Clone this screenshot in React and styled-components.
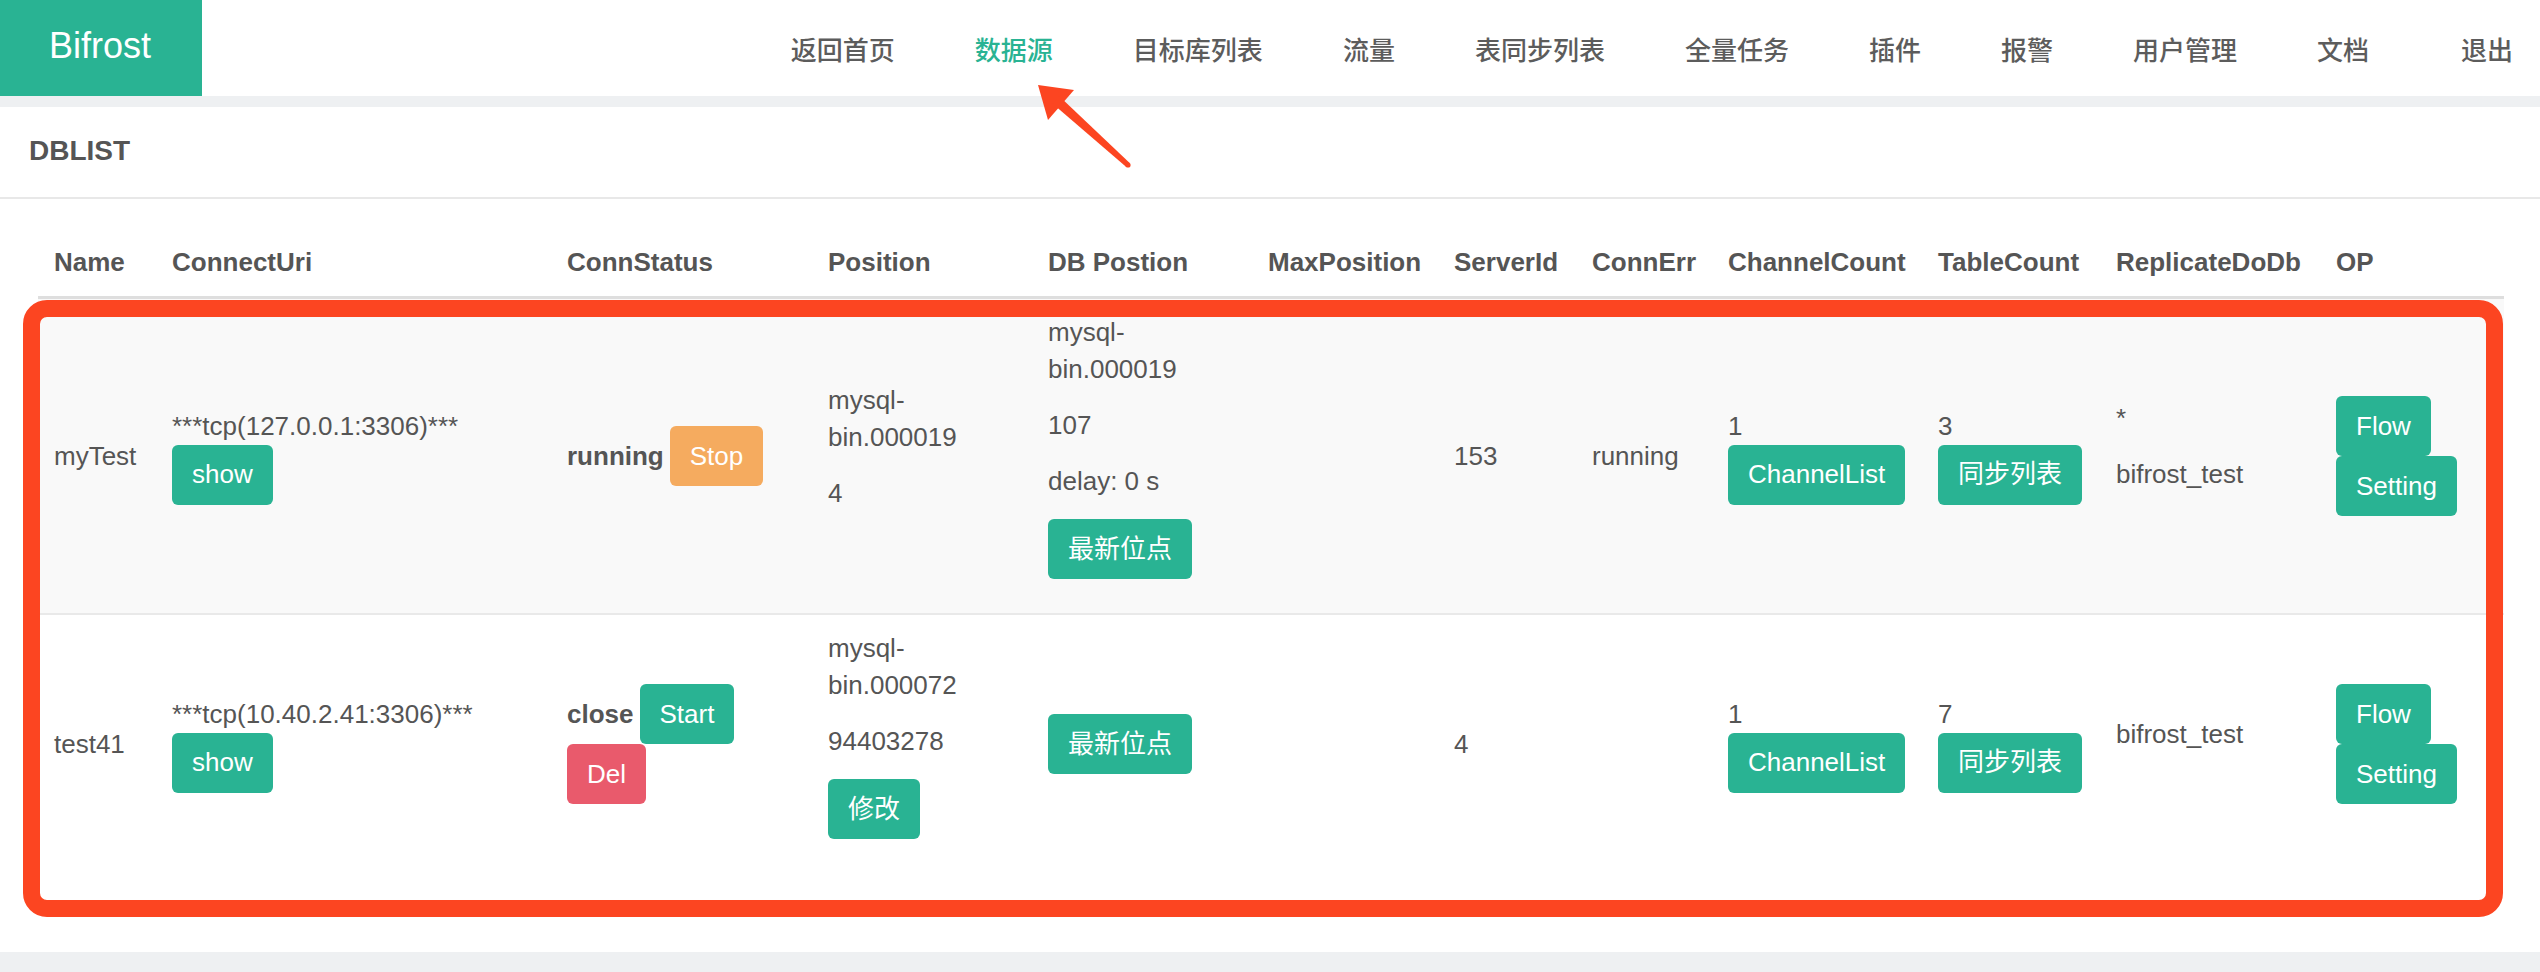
import React from "react";
import styled, { createGlobalStyle } from "styled-components";

const GREEN = "#29b393";

const GlobalStyle = createGlobalStyle`
  html, body { margin: 0; padding: 0; }
  body {
    background: #eef0f2;
    font-family: "Liberation Sans", "Noto Sans CJK SC", sans-serif;
    color: #555;
    min-height: 100vh;
  }
  * { box-sizing: border-box; }
`;

const Page = styled.div`
  position: relative;
  width: 2540px;
`;

const Header = styled.header`
  height: 96px;
  background: #fff;
  display: flex;
  align-items: center;
`;

const Logo = styled.div`
  width: 202px;
  height: 96px;
  background: ${GREEN};
  color: #fff;
  font-size: 36px;
  display: flex;
  align-items: center;
  padding: 0 0 4px 49px;
`;

const Nav = styled.nav`
  margin-left: auto;
  display: flex;
  align-items: center;
  gap: 80px;
  padding-right: 27px;
`;

const NavItem = styled.a`
  font-family: "Noto Sans CJK SC", "Liberation Sans", sans-serif;
  font-size: 26px;
  font-weight: 500;
  line-height: 37px;
  color: ${(p) => (p.$active ? GREEN : "#5c5c5c")};
  margin-left: ${(p) => (p.$extra ? "12px" : "0")};
  text-decoration: none;
  white-space: nowrap;
`;

const Panel = styled.section`
  margin-top: 11px;
  background: #fff;
`;

const PanelHeading = styled.h2`
  margin: 0;
  height: 92px;
  padding: 0 0 2px 29px;
  display: flex;
  align-items: center;
  font-size: 28px;
  font-weight: bold;
  color: #555;
  border-bottom: 2px solid #e8e8e8;
`;

const PanelBody = styled.div`
  position: relative;
  padding: 30px 36px 79px 38px;
`;

const Table = styled.table`
  width: 100%;
  table-layout: fixed;
  border-collapse: collapse;
  font-size: 26px;
  line-height: 37px;
  color: #555;
`;

const Th = styled.th`
  text-align: left;
  vertical-align: bottom;
  font-weight: bold;
  padding: 15px 16px;
  border-bottom: 3px solid #dedede;
  white-space: nowrap;
`;

const Tr = styled.tr`
  background: ${(p) => (p.$striped ? "#f9f9f9" : "#fff")};
`;

const Td = styled.td`
  padding: 15px 16px;
  vertical-align: middle;
  border-top: 2px solid #e9e9e9;
`;

const P = styled.p`
  margin: 0 0 19px;
`;

const Line = styled.div`
  line-height: 37px;
  white-space: nowrap;
`;

const Stack = styled.div`
  display: flex;
  flex-direction: column;
  align-items: flex-start;
`;

const Inline = styled.div`
  display: flex;
  align-items: baseline;
  gap: 6px;
`;

const Status = styled.b`
  font-weight: bold;
`;

const COLORS = { green: GREEN, orange: "#f5ab5f", red: "#e95a6c" };

const Btn = styled.button`
  display: inline-block;
  border: none;
  border-radius: 6px;
  padding: 11.5px 20px;
  font-family: "Liberation Sans", "Noto Sans CJK SC", sans-serif;
  font-size: 26px;
  line-height: 37px;
  color: #fff;
  background: ${(p) => COLORS[p.$variant || "green"]};
  white-space: nowrap;
  cursor: pointer;
`;

const RedFrame = styled.div`
  position: absolute;
  left: 23px;
  top: 101px;
  width: 2480px;
  height: 617px;
  border: 17px solid #fc4521;
  border-radius: 24px;
  pointer-events: none;
`;

const ArrowSvg = styled.svg`
  position: absolute;
  left: 1020px;
  top: 75px;
  width: 125px;
  height: 105px;
  pointer-events: none;
`;

const navItems = ["返回首页", "数据源", "目标库列表", "流量", "表同步列表", "全量任务", "插件", "报警", "用户管理", "文档"];
const cols = [
  ["Name", 118], ["ConnectUri", 395], ["ConnStatus", 261], ["Position", 220],
  ["DB Postion", 220], ["MaxPosition", 186], ["ServerId", 138], ["ConnErr", 136],
  ["ChannelCount", 210], ["TableCount", 178], ["ReplicateDoDb", 220], ["OP", 184],
];

export default function App() {
  return (
    <Page>
      <GlobalStyle />
      <Header>
        <Logo>Bifrost</Logo>
        <Nav>
          {navItems.map((n) => (
            <NavItem key={n} $active={n === "数据源"}>{n}</NavItem>
          ))}
          <NavItem $extra>退出</NavItem>
        </Nav>
      </Header>
      <Panel>
        <PanelHeading>DBLIST</PanelHeading>
        <PanelBody>
          <Table>
            <colgroup>
              {cols.map(([n, w]) => (
                <col key={n} style={{ width: w }} />
              ))}
            </colgroup>
            <thead>
              <tr>
                {cols.map(([n]) => (
                  <Th key={n}>{n}</Th>
                ))}
              </tr>
            </thead>
            <tbody>
              <Tr $striped>
                <Td>myTest</Td>
                <Td>
                  <Stack>
                    <Line>***tcp(127.0.0.1:3306)***</Line>
                    <Btn>show</Btn>
                  </Stack>
                </Td>
                <Td>
                  <Inline>
                    <Status>running</Status>
                    <Btn $variant="orange">Stop</Btn>
                  </Inline>
                </Td>
                <Td>
                  <P>mysql-bin.000019</P>
                  <P>4</P>
                </Td>
                <Td>
                  <P>mysql-bin.000019</P>
                  <P>107</P>
                  <P>delay: 0 s</P>
                  <P><Btn>最新位点</Btn></P>
                </Td>
                <Td></Td>
                <Td>153</Td>
                <Td>running</Td>
                <Td>
                  <Stack>
                    <Line>1</Line>
                    <Btn>ChannelList</Btn>
                  </Stack>
                </Td>
                <Td>
                  <Stack>
                    <Line>3</Line>
                    <Btn>同步列表</Btn>
                  </Stack>
                </Td>
                <Td>
                  <P>*</P>
                  <P>bifrost_test</P>
                </Td>
                <Td>
                  <Stack>
                    <Btn>Flow</Btn>
                    <Btn>Setting</Btn>
                  </Stack>
                </Td>
              </Tr>
              <Tr>
                <Td>test41</Td>
                <Td>
                  <Stack>
                    <Line>***tcp(10.40.2.41:3306)***</Line>
                    <Btn>show</Btn>
                  </Stack>
                </Td>
                <Td>
                  <Stack>
                    <Inline>
                      <Status>close</Status>
                      <Btn>Start</Btn>
                    </Inline>
                    <Btn $variant="red">Del</Btn>
                  </Stack>
                </Td>
                <Td>
                  <P>mysql-bin.000072</P>
                  <P>94403278</P>
                  <P><Btn>修改</Btn></P>
                </Td>
                <Td>
                  <Btn>最新位点</Btn>
                </Td>
                <Td></Td>
                <Td>4</Td>
                <Td></Td>
                <Td>
                  <Stack>
                    <Line>1</Line>
                    <Btn>ChannelList</Btn>
                  </Stack>
                </Td>
                <Td>
                  <Stack>
                    <Line>7</Line>
                    <Btn>同步列表</Btn>
                  </Stack>
                </Td>
                <Td>
                  <P>bifrost_test</P>
                </Td>
                <Td>
                  <Stack>
                    <Btn>Flow</Btn>
                    <Btn>Setting</Btn>
                  </Stack>
                </Td>
              </Tr>
            </tbody>
          </Table>
          <RedFrame />
        </PanelBody>
      </Panel>
      <ArrowSvg viewBox="1020 75 125 105">
        <polygon points="1038,85 1048,120 1074,90" fill="#fc4521" />
        <polygon points="1059.3,96.3 1129.7,163.1 1126.3,166.9 1052.7,103.7" fill="#fc4521" />
        <circle cx="1128" cy="165" r="2.6" fill="#fc4521" />
      </ArrowSvg>
    </Page>
  );
}
